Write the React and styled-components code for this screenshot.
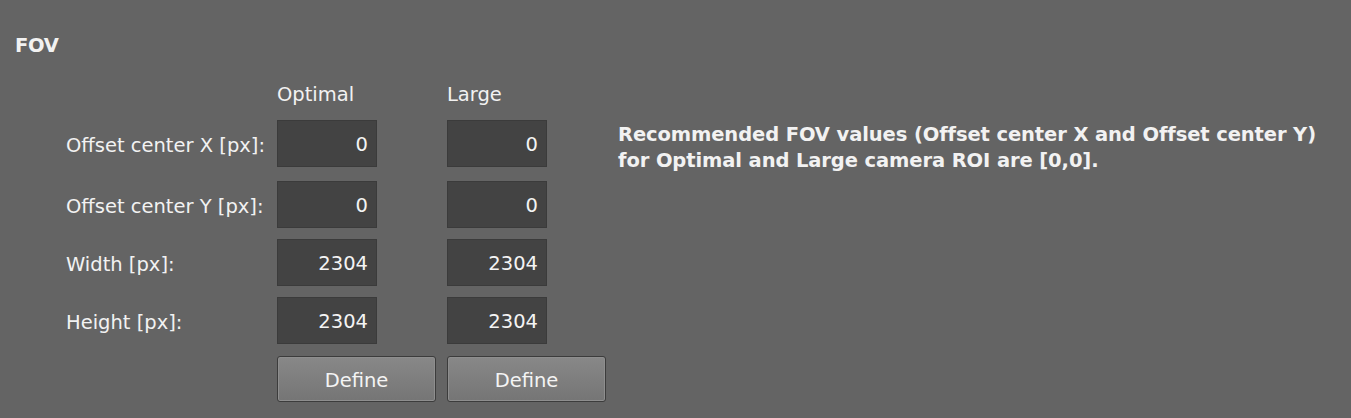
import React from 'react';
import styled, { createGlobalStyle } from 'styled-components';

const GlobalStyle = createGlobalStyle`
  html, body {
    margin: 0;
    padding: 0;
    background: #646464;
  }
  body {
    font-family: "DejaVu Sans", Tahoma, Verdana, sans-serif;
    color: #f2f2f2;
  }
`;

const Panel = styled.div`
  width: 1351px;
  height: 418px;
  box-sizing: border-box;
  padding: 34px 0 0 15px;
  background: #646464;
  overflow: hidden;
`;

const SectionTitle = styled.div`
  font-weight: bold;
  font-size: 19.5px;
  line-height: 24px;
  letter-spacing: -0.3px;
`;

const Content = styled.div`
  display: flex;
  align-items: flex-start;
  margin-top: 23px;
  padding-left: 51px;
`;

const Form = styled.div`
  display: flex;
  flex-direction: column;
  width: 541px;
`;

const Row = styled.div`
  display: flex;
  align-items: center;
  margin-top: ${(p) => p.$gap || 0}px;
  height: ${(p) => p.$height || 47}px;
`;

const Label = styled.div`
  width: 211px;
  flex: none;
  font-size: 19.5px;
  white-space: nowrap;
  padding-top: 3px;
`;

const ColumnHead = styled.div`
  width: 170px;
  flex: none;
  font-size: 19.5px;
`;

const ValueBox = styled.div`
  width: 100px;
  height: 47px;
  box-sizing: border-box;
  flex: none;
  margin-right: ${(p) => (p.$last ? 0 : 70)}px;
  display: flex;
  align-items: center;
  justify-content: flex-end;
  padding: 2px 8px 0 0;
  background: #434343;
  border: 1px solid #3b3b3b;
  font-size: 19.5px;
  color: #f4f4f4;
`;

const DefineButton = styled.button`
  width: 159px;
  height: 46px;
  flex: none;
  box-sizing: border-box;
  margin-right: ${(p) => (p.$last ? 0 : 11)}px;
  border: 1px solid #3c3c3c;
  border-radius: 3px;
  box-shadow: inset 0 0 0 1px #8e8e8e;
  background: linear-gradient(#888888, #757575);
  font-family: "DejaVu Sans", Tahoma, Verdana, sans-serif;
  font-size: 19.5px;
  color: #f4f4f4;
  padding: 2px 0 0;
`;

const Note = styled.div`
  margin: 41px 0 0 11px;
  font-weight: bold;
  font-size: 19.5px;
  line-height: 26px;
  letter-spacing: -0.1px;
  white-space: nowrap;
`;

const fields = [
  { label: 'Offset center X [px]:', optimal: '0', large: '0', gap: 13 },
  { label: 'Offset center Y [px]:', optimal: '0', large: '0', gap: 14 },
  { label: 'Width [px]:', optimal: '2304', large: '2304', gap: 11 },
  { label: 'Height [px]:', optimal: '2304', large: '2304', gap: 11 },
];

export default function App() {
  return (
    <Panel>
      <GlobalStyle />
      <SectionTitle>FOV</SectionTitle>
      <Content>
        <Form>
          <Row $height={26}>
            <Label />
            <ColumnHead>Optimal</ColumnHead>
            <ColumnHead>Large</ColumnHead>
          </Row>
          {fields.map((f) => (
            <Row key={f.label} $gap={f.gap}>
              <Label>{f.label}</Label>
              <ValueBox>{f.optimal}</ValueBox>
              <ValueBox $last>{f.large}</ValueBox>
            </Row>
          ))}
          <Row $gap={12} $height={46}>
            <Label />
            <DefineButton>Define</DefineButton>
            <DefineButton $last>Define</DefineButton>
          </Row>
        </Form>
        <Note>
          Recommended FOV values (Offset center X and Offset center Y)
          <br />
          for Optimal and Large camera ROI are [0,0].
        </Note>
      </Content>
    </Panel>
  );
}
